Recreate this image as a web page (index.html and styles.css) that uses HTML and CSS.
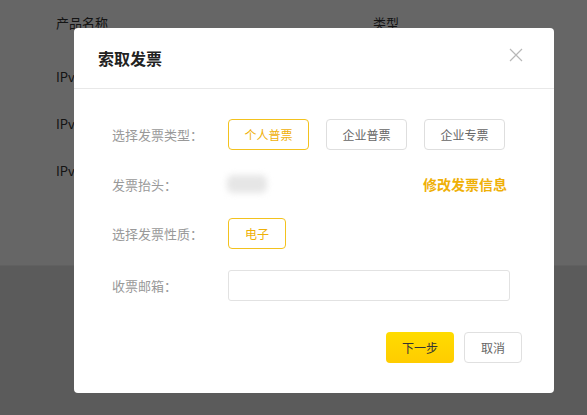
FILE: index.html
```html
<!DOCTYPE html>
<html lang="zh-CN">
<head>
<meta charset="utf-8">
<title>索取发票</title>
<link rel="stylesheet" href="styles.css">
</head>
<body>
<div class="page">
  <div class="product-table">
    <div class="table-head">
      <span class="col-name">产品名称</span>
      <span class="col-type">类型</span>
    </div>
    <div class="table-row"><span class="col-name">IPv6</span></div>
    <div class="table-row"><span class="col-name">IPv6</span></div>
    <div class="table-row"><span class="col-name">IPv6</span></div>
  </div>
  <div class="page-footer"></div>
</div>

<div class="mask"></div>

<div class="modal">
  <div class="modal-header">
    <h2 class="modal-title">索取发票</h2>
    <button class="modal-close" aria-label="关闭">
      <svg width="14" height="14" viewBox="0 0 14 14"><path d="M1 1L13 13M13 1L1 13" stroke="#b8b8b8" stroke-width="1.2" fill="none"/></svg>
    </button>
  </div>
  <div class="modal-body">
    <div class="form-row">
      <span class="form-label">选择发票类型：</span>
      <div class="options">
        <button class="option option-active">个人普票</button>
        <button class="option">企业普票</button>
        <button class="option">企业专票</button>
      </div>
    </div>
    <div class="form-row">
      <span class="form-label">发票抬头：</span>
      <span class="title-value"></span>
      <a class="edit-link" href="#">修改发票信息</a>
    </div>
    <div class="form-row">
      <span class="form-label">选择发票性质：</span>
      <div class="options">
        <button class="option option-active option-small">电子</button>
      </div>
    </div>
    <div class="form-row form-row-last">
      <span class="form-label">收票邮箱：</span>
      <input class="email-input" type="text">
    </div>
  </div>
  <div class="modal-footer">
    <button class="btn btn-primary">下一步</button>
    <button class="btn btn-default">取消</button>
  </div>
</div>
</body>
</html>
```

FILE: styles.css
```css
* { box-sizing: border-box; }

html, body {
  margin: 0;
  height: 100%;
}

body {
  font-family: "Noto Sans CJK SC", "Liberation Sans", sans-serif;
  color: #333;
  background: #e4e4e4;
  overflow: hidden;
}

/* page behind the dialog */
.page {
  height: 100%;
  display: flex;
  flex-direction: column;
}

.product-table {
  background: #fff;
  height: 265px;
  padding-left: 56px;
  font-size: 13px;
}

.table-head {
  display: flex;
  height: 44px;
  align-items: center;
  margin-bottom: 8.5px;
}

.table-row {
  display: flex;
  height: 47px;
  align-items: center;
}

.col-name { width: 317px; }

.page-footer {
  flex: 1;
  background: #e4e4e4;
  border-top: 1px solid #f0f0f0;
}

.mask {
  position: fixed;
  inset: 0;
  background: rgba(0, 0, 0, 0.6);
}

/* dialog */
.modal {
  position: absolute;
  left: 74px;
  top: 28px;
  width: 480px;
  background: #fff;
  border-radius: 4px;
}

.modal-header {
  height: 61px;
  padding: 0 31px 0 24px;
  display: flex;
  align-items: center;
  justify-content: space-between;
  border-bottom: 1px solid #e8e8e8;
}

.modal-title {
  margin: 0;
  font-size: 16px;
  font-weight: 700;
  color: #222;
}

.modal-close {
  border: 0;
  background: none;
  padding: 0;
  width: 14px;
  height: 14px;
  margin-bottom: 6px;
  display: flex;
}

.modal-body {
  padding: 30px 44px 0 38px;
}

.form-row {
  display: flex;
  align-items: center;
  height: 31px;
  margin-bottom: 18.5px;
}

.form-row:nth-child(3) { margin-bottom: 21px; }
.form-row-last { margin-bottom: 0; }

.form-label {
  width: 116px;
  flex-shrink: 0;
  font-size: 13px;
  color: #999;
}

.options {
  display: flex;
  gap: 17px;
}

.option {
  width: 81px;
  height: 31px;
  border: 1px solid #dedede;
  border-radius: 4px;
  background: #fff;
  font-family: inherit;
  font-size: 12px;
  color: #666;
  padding: 0;
}

.option-active {
  border-color: #f3c21e;
  color: #efb007;
}

.option-small { width: 58px; }

.title-value {
  width: 40px;
  height: 18px;
  margin-left: -1px;
  background: #e6e6e6;
  border-radius: 6px;
  filter: blur(3px);
}

.edit-link {
  margin-left: auto;
  margin-right: 3px;
  font-size: 14px;
  font-weight: 700;
  color: #efb007;
  text-decoration: none;
}

.email-input {
  width: 282px;
  height: 31px;
  border: 1px solid #e2e2e2;
  border-radius: 3px;
  outline: none;
}

.modal-footer {
  display: flex;
  justify-content: flex-end;
  gap: 10px;
  padding: 31px 32px 30px;
}

.btn {
  height: 31px;
  border-radius: 4px;
  font-family: inherit;
  font-size: 12px;
  padding: 0;
}

.btn-primary {
  width: 68px;
  border: 0;
  background: linear-gradient(180deg, #ffdc00 0%, #ffcc00 100%);
  color: #333;
}

.btn-default {
  width: 58px;
  border: 1px solid #e0e0e0;
  background: #fff;
  color: #666;
}
```
